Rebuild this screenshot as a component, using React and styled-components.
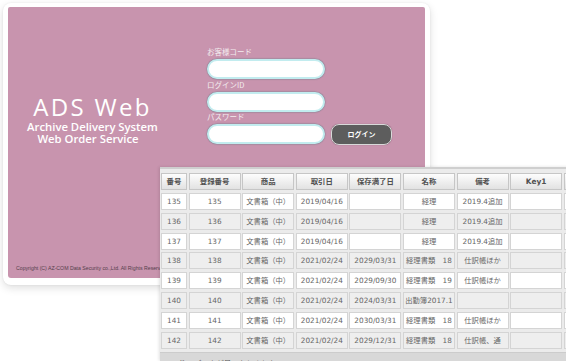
import styled, { createGlobalStyle } from 'styled-components'

const GlobalStyle = createGlobalStyle`
  html, body {
    margin: 0;
    padding: 0;
    background: #ffffff;
  }
  body {
    font-family: "DejaVu Sans", "Noto Sans CJK JP", sans-serif;
  }
`

const Stage = styled.div`
  position: relative;
  width: 566px;
  height: 361px;
  box-sizing: border-box;
  padding: 3px 0 0 3px;
  overflow: hidden;
  background: #ffffff;
`

const LoginCard = styled.div`
  width: 427px;
  height: 282px;
  box-sizing: border-box;
  padding: 4px 5px 7px 5px;
  background: #ffffff;
  border-radius: 8px;
  box-shadow: 0 3px 8px rgba(0, 0, 0, 0.13), 0 0 2px rgba(0, 0, 0, 0.08);
`

const LoginPanel = styled.div`
  height: 100%;
  display: flex;
  flex-direction: column;
  background: #c894ae;
  border-radius: 2px 2px 3px 3px;
`

const PanelBody = styled.div`
  flex: 1;
  display: flex;
  align-items: flex-start;
`

const Brand = styled.div`
  width: 169px;
  margin-top: 88px;
  text-align: center;
  color: #ffffff;
  font-family: "Open Sans", sans-serif;
`

const BrandTitle = styled.div`
  font-weight: 400;
  font-size: 24px;
  line-height: 23px;
  letter-spacing: 2.3px;
`

const BrandSub = styled.div`
  font-weight: 600;
  font-size: 11.3px;
  line-height: 12px;
  margin-top: ${(p) => (p.$first ? '3px' : '0')};
  padding-right: ${(p) => (p.$first ? '0' : '9px')};
`

const LoginForm = styled.div`
  margin: 40px 0 0 30px;
  display: flex;
  flex-direction: column;
`

const Field = styled.div`
  display: flex;
  flex-direction: column;
`

const FieldLabel = styled.label`
  display: block;
  height: 10px;
  margin-bottom: 2px;
  font-family: "Noto Sans CJK JP", sans-serif;
  font-size: 7.5px;
  line-height: 10px;
  color: #f3ecef;
`

const FieldRow = styled.div`
  display: flex;
  align-items: center;
  gap: 6px;
  height: 20.5px;
`

const TextBox = styled.div`
  width: 118px;
  height: 20px;
  box-sizing: border-box;
  background: #ffffff;
  border: 2px solid #c2ecef;
  border-radius: 11px;
  box-shadow: 0 0 1px 0.5px rgba(70, 110, 120, 0.45);
`

const LoginButton = styled.div`
  width: 61px;
  height: 21px;
  box-sizing: border-box;
  display: flex;
  align-items: center;
  justify-content: center;
  background: #5d5d5d;
  border: 1px solid #d9d9d9;
  border-radius: 8px;
  box-shadow: 0 0 1px rgba(0, 0, 0, 0.4);
  color: #ffffff;
  font-family: "Noto Sans CJK JP", sans-serif;
  font-weight: 700;
  font-size: 7px;
`

const Copyright = styled.div`
  padding: 0 0 6px 8px;
  font-family: "Liberation Sans", sans-serif;
  font-size: 5.2px;
  line-height: 7px;
  color: #55404c;
`

const TablePanel = styled.div`
  position: absolute;
  left: 160px;
  top: 167px;
  width: 420px;
  bottom: 0;
  display: flex;
  flex-direction: column;
  background: #ebebeb;
  border-top: 2px solid #cfcfcf;
  box-shadow: -1px 0 3px rgba(0, 0, 0, 0.12);
  overflow: hidden;
`

const Grid = styled.div`
  padding: 4px 0 0 1px;
  display: flex;
  flex-direction: column;
  gap: 2.86px;
`

const Row = styled.div`
  display: grid;
  grid-template-columns: 26px repeat(9, 52px);
  column-gap: 1.6px;
  height: 17px;
`

const HeadCell = styled.div`
  box-sizing: border-box;
  border: 1px solid #c6c6c6;
  background: linear-gradient(#fdfdfd, #e2e2e2);
  text-align: center;
  font-weight: 700;
  font-size: 7.4px;
  line-height: 15px;
  color: #505050;
  white-space: nowrap;
  overflow: hidden;
`

const Cell = styled.div`
  box-sizing: border-box;
  border: 1px solid #d4d4d4;
  background: ${(p) => (p.$alt ? '#eeeeee' : '#ffffff')};
  text-align: center;
  font-size: 7.3px;
  line-height: 15px;
  color: #666666;
  white-space: nowrap;
  overflow: hidden;
`

const Footer = styled.div`
  flex: 1;
  margin-top: 3px;
  display: flex;
  align-items: flex-start;
  padding: 7px 0 0 2px;
  background: #d8d8d8;
  border-top: 1px solid #cccccc;
  font-size: 7.5px;
  line-height: 10px;
  color: #555555;
  white-space: nowrap;
`

const Pager = styled.span`
  margin-left: 22px;
  letter-spacing: 2px;
`

const CloseButton = styled.div`
  margin: -1px 0 0 212px;
  width: 10px;
  height: 10px;
  background: #e03a3a;
  border-radius: 1px;
`

const headers = ['番号', '登録番号', '商品', '取引日', '保存満了日', '名称', '備考', 'Key1', '']

const rows = [
  ['135', '135', '文書箱（中）', '2019/04/16', '', '経理', '2019.4追加', '', ''],
  ['136', '136', '文書箱（中）', '2019/04/16', '', '経理', '2019.4追加', '', ''],
  ['137', '137', '文書箱（中）', '2019/04/16', '', '経理', '2019.4追加', '', ''],
  ['138', '138', '文書箱（中）', '2021/02/24', '2029/03/31', '経理書類　18', '仕訳帳ほか', '', ''],
  ['139', '139', '文書箱（中）', '2021/02/24', '2029/09/30', '経理書類　19', '仕訳帳ほか', '', ''],
  ['140', '140', '文書箱（中）', '2021/02/24', '2024/03/31', '出勤簿2017.1', '', '', ''],
  ['141', '141', '文書箱（中）', '2021/02/24', '2030/03/31', '経理書類　18', '仕訳帳ほか', '', ''],
  ['142', '142', '文書箱（中）', '2021/02/24', '2029/12/31', '経理書類　18', '仕訳帳、通', '', ''],
]

const fields = ['お客様コード', 'ログインID', 'パスワード']

export default function App() {
  return (
    <>
      <GlobalStyle />
      <Stage>
        <LoginCard>
          <LoginPanel>
            <PanelBody>
              <Brand>
                <BrandTitle>ADS Web</BrandTitle>
                <BrandSub $first>Archive Delivery System</BrandSub>
                <BrandSub>Web Order Service</BrandSub>
              </Brand>
              <LoginForm>
                {fields.map((f, i) => (
                  <Field key={f}>
                    <FieldLabel>{f}</FieldLabel>
                    <FieldRow>
                      <TextBox />
                      {i === fields.length - 1 && <LoginButton>ログイン</LoginButton>}
                    </FieldRow>
                  </Field>
                ))}
              </LoginForm>
            </PanelBody>
            <Copyright>Copyright (C) AZ-COM Data Security co.,Ltd. All Rights Reserved.</Copyright>
          </LoginPanel>
        </LoginCard>

        <TablePanel>
          <Grid>
            <Row>
              {headers.map((h, i) => (
                <HeadCell key={i}>{h}</HeadCell>
              ))}
            </Row>
            {rows.map((r, ri) => (
              <Row key={r[0]}>
                {r.map((v, ci) => (
                  <Cell key={ci} $alt={ri % 2 === 1}>
                    {v}
                  </Cell>
                ))}
              </Row>
            ))}
          </Grid>
          <Footer>
            <span>122 件のデータが見つかりました。</span>
            <Pager>|&lt; &lt; 1 / 1 &gt; &gt;|</Pager>
            <CloseButton />
          </Footer>
        </TablePanel>
      </Stage>
    </>
  )
}
